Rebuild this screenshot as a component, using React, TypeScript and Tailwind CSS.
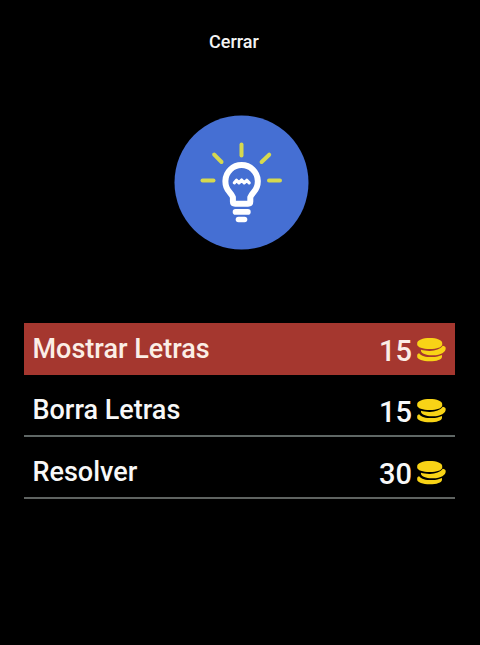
interface Hint {
  label: string;
  cost: number;
  className: string;
}

const hints: Hint[] = [
  { label: "Mostrar Letras", cost: 15, className: "h-[52px] bg-[#a5372f] text-[#fbeee6]" },
  { label: "Borra Letras", cost: 15, className: "mt-[9px] h-[53px] border-b-2 border-[#5f6765] text-[#f8f8f8]" },
  { label: "Resolver", cost: 30, className: "mt-[9px] h-[53px] border-b-2 border-[#5f6361] text-[#f8f8f8]" },
];

function BulbIcon() {
  return (
    <svg width="135" height="135" viewBox="-0.5 -0.5 135 135" fill="none" strokeLinecap="round" strokeLinejoin="round" aria-hidden>
      <circle cx="67" cy="67" r="67" fill="#456fd3" />
      <g stroke="#d6d94f" strokeWidth="4">
        <path d="M67 29v11" />
        <path d="M28 65h11" />
        <path d="M94.5 65h11" />
        <path d="M39.7 39.2l7.3 7.3" />
        <path d="M94.7 39.2l-7.6 7.3" />
      </g>
      <path
        d="M58.4 81.8C57.6 79.6 56.4 78.2 55.1 76.7A16.2 16.2 0 1 1 79.1 76.7C77.8 78.2 76.6 79.6 75.8 81.8V86Q75.8 88.2 73.6 88.2H60.6Q58.4 88.2 58.4 86Z"
        stroke="#fff"
        strokeWidth="6"
      />
      <path d="M59.8 67.4l2.2-2.6 2.5 2.6 2.6-2.9 2.6 2.9 2.6-2.6 2.4 2.6" stroke="#fff" strokeWidth="3.2" />
      <path d="M61 96.4h12.4" stroke="#fff" strokeWidth="5.6" />
      <path d="M64 104h6" stroke="#fff" strokeWidth="5.6" />
    </svg>
  );
}

function CoinsIcon() {
  return (
    <svg width="29" height="24" viewBox="0 0 29 24" fill="#f8d316" aria-hidden>
      <path d="M0.2 5.1C0.2 2.1 5.8 0 12.8 0s12.4 2.1 12.4 5.1v1.3c0 2.7-5.4 4.6-12.4 4.6S0.2 9.1 0.2 6.4z" />
      <path d="M4 11.8c2.7.8 5.9 1.2 9.1 1.1 5.4-.2 10.2-1.7 12.6-5.1 1.7.3 2.8 1 3 2.1.3 4.2-4.8 7.1-12.7 7.4-6.3.3-11.3-1.6-12-4.2z" />
      <path d="M2.2 15.2c2.1 2.9 7.3 4.1 13.2 3.9 3.6-.1 6.8-.8 9.6-2.1v1.7c0 2.8-5.4 4.6-12.2 4.6S0.2 21.5 0.2 18.8v-1.9c.1-.8.9-1.3 2-1.7z" />
    </svg>
  );
}

function HintRow({ label, cost, className }: Hint) {
  return (
    <li className={`flex pr-[9px] pl-[8.5px] font-medium leading-[52px] ${className}`}>
      <span className="grow text-[27px]">{label}</span>
      <span className="mt-[2px] mr-[5px] text-[29px]">{cost}</span>
      <span className="pt-[15px]">
        <CoinsIcon />
      </span>
    </li>
  );
}

export default function App() {
  return (
    <main className="flex h-[645px] w-[480px] flex-col bg-black font-['Roboto',sans-serif]">
      <button className="mt-[30px] ml-[209px] self-start text-[18px] font-medium leading-6 text-[#f4f4f4]">Cerrar</button>
      <div className="mt-[61px] ml-[174px] h-[135px]">
        <BulbIcon />
      </div>
      <ul className="mt-[73px] ml-6 w-[431px]">
        {hints.map((hint) => (
          <HintRow key={hint.label} {...hint} />
        ))}
      </ul>
    </main>
  );
}
